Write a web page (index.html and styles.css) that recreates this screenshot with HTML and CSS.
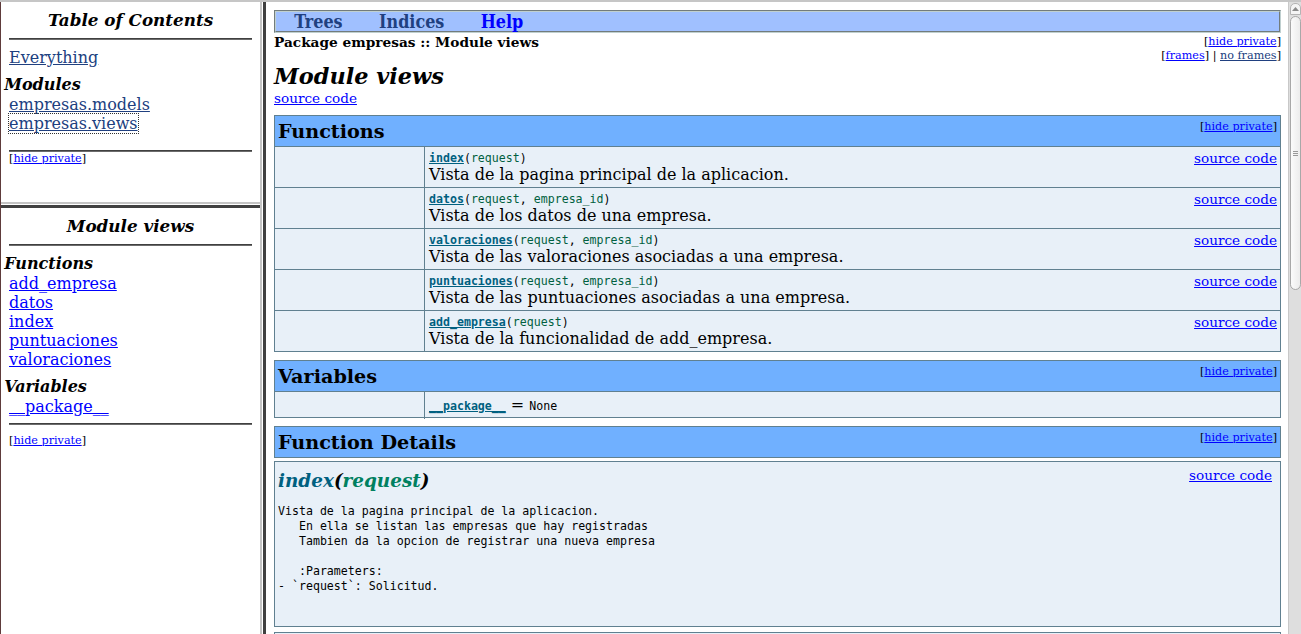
FILE: index.html
```html
<!DOCTYPE html>
<html lang="es">
<head>
<meta charset="utf-8">
<title>empresas.views</title>
<link rel="stylesheet" href="styles.css">
</head>
<body>
<div class="frameset">
  <div class="left-col">
    <div class="toc-pane toc-top">
      <h1 class="toc">Table&nbsp;of&nbsp;Contents</h1>
      <hr class="toc-rule top-rule-a">
      <div class="toc-line"><a class="visited" href="#">Everything</a></div>
      <h2 class="toc">Modules</h2>
      <div class="toc-line"><a class="visited" href="#">empresas.models</a></div>
      <div class="toc-line"><a class="visited focused" href="#">empresas.views</a></div>
      <hr class="toc-rule top-rule-b">
      <div class="options toc-options-top">[<a href="#">hide&nbsp;private</a>]</div>
    </div>
    <div class="hsep"></div>
    <div class="toc-pane toc-bottom">
      <h1 class="toc">Module views</h1>
      <hr class="toc-rule bottom-rule-a">
      <h2 class="toc toc-functions">Functions</h2>
      <div class="toc-line"><a href="#">add_empresa</a></div>
      <div class="toc-line"><a href="#">datos</a></div>
      <div class="toc-line"><a href="#">index</a></div>
      <div class="toc-line"><a href="#">puntuaciones</a></div>
      <div class="toc-line"><a href="#">valoraciones</a></div>
      <h2 class="toc toc-variables">Variables</h2>
      <div class="toc-line"><a href="#">__package__</a></div>
      <hr class="toc-rule bottom-rule-b">
      <div class="options toc-options-bottom">[<a href="#">hide&nbsp;private</a>]</div>
    </div>
  </div>
  <div class="vsep"></div>
  <div class="main-pane">
    <div class="navbar">
      <span class="nav-item">&nbsp;&nbsp;&nbsp;<a class="visited" href="#">Trees</a>&nbsp;&nbsp;&nbsp;</span>
      <span class="nav-item">&nbsp;&nbsp;&nbsp;<a class="visited" href="#">Indices</a>&nbsp;&nbsp;&nbsp;</span>
      <span class="nav-item">&nbsp;&nbsp;&nbsp;<a href="#">Help</a>&nbsp;&nbsp;&nbsp;</span>
    </div>
    <div class="crumbs-row">
      <span class="breadcrumbs">Package&nbsp;empresas&nbsp;::&nbsp;Module&nbsp;views</span>
      <div class="crumb-options">
        <div class="options">[<a href="#">hide&nbsp;private</a>]</div>
        <div class="options">[<a href="#">frames</a>]&nbsp;|&nbsp;<a class="visited" href="#">no&nbsp;frames</a>]</div>
      </div>
    </div>
    <h1 class="page-title">Module views</h1>
    <div class="codelink-line"><a href="#">source&nbsp;code</a></div>

    <div class="summary">
      <div class="table-header">
        <span class="table-title">Functions</span>
        <span class="options">[<a href="#">hide&nbsp;private</a>]</span>
      </div>
      <div class="sum-row">
        <div class="sum-type"></div>
        <div class="sum-cell">
          <div class="sum-main">
            <div class="sig-line"><a class="sig-name" href="#">index</a>(<span class="sig-arg">request</span>)</div>
            <div class="doc-line">Vista de la pagina principal de la aplicacion.</div>
          </div>
          <a class="codelink" href="#">source&nbsp;code</a>
        </div>
      </div>
      <div class="sum-row">
        <div class="sum-type"></div>
        <div class="sum-cell">
          <div class="sum-main">
            <div class="sig-line"><a class="sig-name" href="#">datos</a>(<span class="sig-arg">request</span>, <span class="sig-arg">empresa_id</span>)</div>
            <div class="doc-line">Vista de los datos de una empresa.</div>
          </div>
          <a class="codelink" href="#">source&nbsp;code</a>
        </div>
      </div>
      <div class="sum-row">
        <div class="sum-type"></div>
        <div class="sum-cell">
          <div class="sum-main">
            <div class="sig-line"><a class="sig-name" href="#">valoraciones</a>(<span class="sig-arg">request</span>, <span class="sig-arg">empresa_id</span>)</div>
            <div class="doc-line">Vista de las valoraciones asociadas a una empresa.</div>
          </div>
          <a class="codelink" href="#">source&nbsp;code</a>
        </div>
      </div>
      <div class="sum-row">
        <div class="sum-type"></div>
        <div class="sum-cell">
          <div class="sum-main">
            <div class="sig-line"><a class="sig-name" href="#">puntuaciones</a>(<span class="sig-arg">request</span>, <span class="sig-arg">empresa_id</span>)</div>
            <div class="doc-line">Vista de las puntuaciones asociadas a una empresa.</div>
          </div>
          <a class="codelink" href="#">source&nbsp;code</a>
        </div>
      </div>
      <div class="sum-row">
        <div class="sum-type"></div>
        <div class="sum-cell">
          <div class="sum-main">
            <div class="sig-line"><a class="sig-name" href="#">add_empresa</a>(<span class="sig-arg">request</span>)</div>
            <div class="doc-line">Vista de la funcionalidad de add_empresa.</div>
          </div>
          <a class="codelink" href="#">source&nbsp;code</a>
        </div>
      </div>
    </div>

    <div class="summary gap-table">
      <div class="table-header">
        <span class="table-title">Variables</span>
        <span class="options">[<a href="#">hide&nbsp;private</a>]</span>
      </div>
      <div class="sum-row var-row">
        <div class="sum-type"></div>
        <div class="var-cell"><a class="sig-name mono" href="#">__package__</a> = <code class="mono">None</code></div>
      </div>
    </div>

    <div class="summary gap-table">
      <div class="table-header">
        <span class="table-title">Function Details</span>
        <span class="options">[<a href="#">hide&nbsp;private</a>]</span>
      </div>
    </div>

    <div class="details">
      <div class="detail-head">
        <h3 class="detail-sig"><span class="dsig-name">index</span>(<span class="dsig-arg">request</span>)</h3>
        <a class="codelink detail-codelink" href="#">source&nbsp;code</a>
      </div>
<pre class="docstring">Vista de la pagina principal de la aplicacion.
   En ella se listan las empresas que hay registradas
   Tambien da la opcion de registrar una nueva empresa

   :Parameters:
- `request`: Solicitud.
</pre>
    </div>

    <div class="details details-next"></div>
  </div>
  <div class="scrollbar">
    <div class="sb-btn">
      <svg width="7" height="4" viewBox="0 0 7 4"><path d="M0 4 L3.5 0 L7 4 Z" fill="#8a8a8a"/></svg>
    </div>
    <div class="sb-thumb">
      <div class="sb-grip"></div>
    </div>
  </div>
</div>
</body>
</html>
```
FILE: styles.css
```css
* { box-sizing: border-box; }
html, body { margin: 0; padding: 0; }
body {
  background: #ffffff;
  color: #000000;
  font-family: "DejaVu Serif", serif;
  font-size: 16px;
  overflow: hidden;
}
a { color: #0000ff; text-decoration: underline; }
a.visited { color: #204080; }
.mono, code { font-family: "DejaVu Sans Mono", monospace; font-size: 11.6px; }

.frameset {
  display: flex;
  width: 1301px;
  height: 634px;
  border-top: 2px solid #c6c6c6;
}

/* ---------- left frames ---------- */
.left-col {
  width: 260px;
  display: flex;
  flex-direction: column;
  border-left: 1px solid #5e3b3b;
}
.toc-pane { padding: 8px 8px 0 8px; overflow: hidden; }
.toc-top { height: 200px; }
.toc-bottom { flex: 1; }
.hsep {
  height: 6px;
  background: linear-gradient(to bottom, #c4c4c4 0 2px, #ffffff 2px 3px, #404040 3px 6px);
}
.vsep {
  width: 6px;
  background: linear-gradient(to right, #c4c4c4 0 2px, #ffffff 2px 3px, #404040 3px 6px);
}
h1.toc {
  margin: 0;
  font-size: 16.8px;
  line-height: 20px;
  font-style: italic;
  font-weight: bold;
  text-align: center;
}
h2.toc {
  margin: 8px 0 1px -4.8px;
  font-size: 16px;
  line-height: 19px;
  font-style: italic;
  font-weight: bold;
}
.toc-line { line-height: 19px; white-space: nowrap; }
.toc-rule {
  height: 2px;
  border: 0;
  border-top: 1px solid #404040;
  border-bottom: 1px solid #6c6c6c;
  margin: 0;
}
.top-rule-a { margin: 8px 0; }
.top-rule-b { margin: 17px 0 0 0; }
.bottom-rule-a { margin: 8px 0 0 0; }
.toc-functions { margin-top: 9px; }
.toc-variables { margin-top: 9px; }
.bottom-rule-b { margin: 7px 0 0 0; }
.toc-options-bottom { margin-top: 9px; }
.focused { outline: 1px dotted #303030; }

.options {
  font-size: 11.2px;
  line-height: 13px;
  white-space: nowrap;
}

/* ---------- main frame ---------- */
.main-pane {
  flex: 1;
  padding: 8px 7px 0 8px;
  overflow: hidden;
  min-width: 0;
}
.navbar {
  display: flex;
  height: 23px;
  background: #a0c0ff;
  border: 2px groove #c0d0d0;
  font-size: 17.8px;
  font-stretch: condensed;
  font-weight: bold;
  line-height: 20px;
  white-space: nowrap;
}
.nav-item { padding: 0 1.5px; }
.navbar a { text-decoration: none; }

.crumbs-row {
  margin-top: 2px;
  display: flex;
  justify-content: space-between;
  align-items: flex-start;
}
.breadcrumbs {
  font-size: 13.7px;
  font-weight: bold;
  line-height: 14px;
}
.crumb-options { display: flex; flex-direction: column; align-items: flex-end; }
.crumb-options .options { line-height: 14px; }

.page-title {
  margin: 1px 0 0 0;
  font-size: 22.4px;
  line-height: 25px;
  font-style: italic;
  font-weight: bold;
}
.codelink-line {
  font-size: 13.6px;
  line-height: 18px;
  margin-bottom: 8px;
}

.summary {
  border: 1px solid #608090;
  background: #e8f0f8;
}
.gap-table { margin-top: 8px; }
.table-header {
  height: 30px;
  background: #70b0ff;
  display: flex;
  justify-content: space-between;
  align-items: flex-start;
  padding: 4px 3px 0 3px;
}
.table-title {
  font-size: 19.2px;
  font-weight: bold;
  line-height: 24px;
}
.sum-row {
  display: grid;
  grid-template-columns: 150px 1fr;
  height: 41px;
  border-top: 1px solid #608090;
}
.sum-type { border-right: 1px solid #608090; }
.sum-cell {
  display: flex;
  justify-content: space-between;
  align-items: flex-start;
  padding: 4px 3px 0 4px;
}
.sum-cell .codelink { margin-top: -1px; }
.sig-line {
  font-family: "DejaVu Sans Mono", monospace;
  font-size: 11.6px;
  line-height: 15px;
  white-space: nowrap;
}
.sig-name { color: #006080; font-weight: bold; }
a.sig-name { color: #006080; }
.sig-arg { color: #006040; }
.doc-line { line-height: 17px; }
.codelink {
  font-size: 13.6px;
  line-height: 17px;
  white-space: nowrap;
}
.var-row { height: 26px; }
.var-cell { padding: 3px 3px 3px 4px; line-height: 19px; white-space: nowrap; }
.var-cell code { color: #000000; }

.details {
  margin-top: 3px;
  height: 166px;
  border: 1px solid #608090;
  background: #e8f0f8;
  padding: 3px;
}
.details-next { margin-top: 5px; }
.detail-head {
  display: flex;
  justify-content: space-between;
  align-items: flex-start;
}
.detail-sig {
  margin: 5px 0 0 0;
  font-size: 18.4px;
  line-height: 22px;
  font-style: italic;
  font-weight: bold;
}
.dsig-name { color: #006080; }
.dsig-arg { color: #008060; }
.detail-codelink { margin-top: 2px; margin-right: 5px; }
.docstring {
  margin: 12px 0 0 0;
  font-family: "DejaVu Sans Mono", monospace;
  font-size: 11.6px;
  line-height: 15px;
}

/* ---------- scrollbar ---------- */
.scrollbar {
  width: 13px;
  background: #dedede;
  border-left: 1px solid #c8c8c8;
  padding: 1px 0 0 1px;
}
.sb-btn {
  height: 12px;
  border: 1px solid #b4b4b4;
  border-radius: 5px 5px 0 0;
  background: #f4f4f4;
  display: flex;
  justify-content: center;
  padding-top: 3px;
}
.sb-btn svg { display: block; }
.sb-thumb {
  margin-top: 1px;
  height: 274px;
  border: 1px solid #a8a8a8;
  border-radius: 6px;
  background: linear-gradient(to right, #fbfbfb, #ececec);
  display: flex;
  align-items: center;
  justify-content: center;
}
.sb-grip {
  width: 5px;
  height: 5px;
  border-top: 1px solid #999;
  border-bottom: 1px solid #999;
  position: relative;
}
.sb-grip::after {
  content: "";
  position: absolute;
  left: 0;
  right: 0;
  top: 1px;
  border-top: 1px solid #999;
}
```
